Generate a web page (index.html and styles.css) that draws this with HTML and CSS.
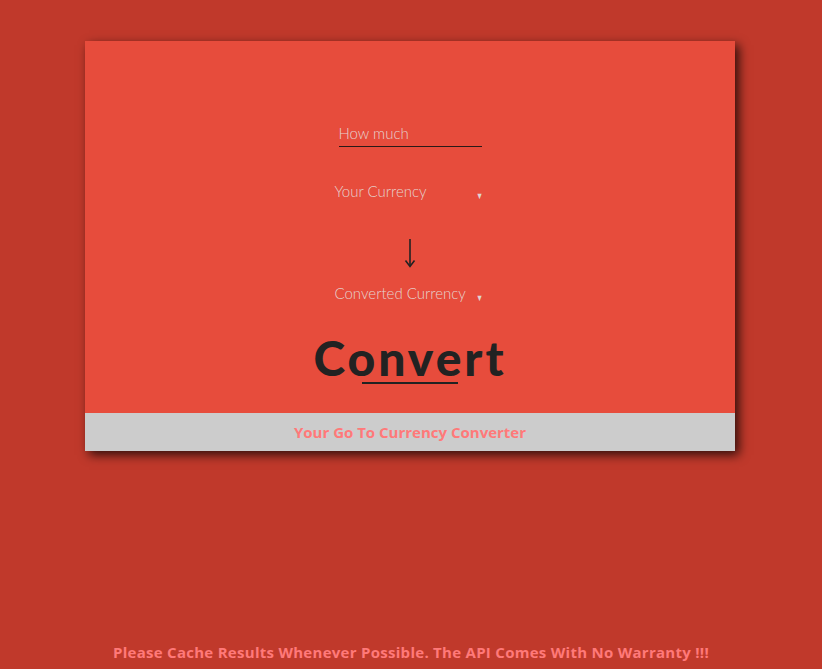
FILE: index.html
```html
<!DOCTYPE html>
<html lang="en">
<head>
<meta charset="utf-8">
<title>Currency Converter</title>
<link rel="stylesheet" href="styles.css">
</head>
<body>
<main class="page">
  <section class="card">
    <div class="card-body">
      <input class="amount" type="text" placeholder="How much">
      <div class="select first">
        <span class="select-label">Your Currency</span>
        <span class="caret">▼</span>
      </div>
      <div class="down-arrow">
        <svg width="16" height="30" viewBox="0 0 16 30" aria-hidden="true">
          <path d="M8 1 V28" stroke="#222" stroke-width="1.6" fill="none"/>
          <path d="M3.5 22.5 L8 28.5 L12.5 22.5" stroke="#222" stroke-width="1.6" fill="none" stroke-linejoin="miter"/>
        </svg>
      </div>
      <div class="select second">
        <span class="select-label">Converted Currency</span>
        <span class="caret">▼</span>
      </div>
      <button class="convert" type="button">Convert</button>
    </div>
    <footer class="card-footer">Your Go To Currency Converter</footer>
  </section>
  <p class="notice">Please Cache Results Whenever Possible. The API Comes With No Warranty !!!</p>
</main>
</body>
</html>
```

FILE: styles.css
```css
* { box-sizing: border-box; }
html, body { margin: 0; padding: 0; }
body {
  background: #c0392b;
  font-family: "Lato", "Open Sans", sans-serif;
  height: 669px;
  overflow: hidden;
}
.page {
  display: flex;
  flex-direction: column;
  align-items: center;
  padding-top: 41px;
  height: 669px;
}
.card {
  width: 650px;
  margin-left: -2px;
  box-shadow: 4px 4px 10px rgba(0, 0, 0, 0.75);
}
.card-body {
  background: #e74c3c;
  height: 372px;
  display: flex;
  flex-direction: column;
  align-items: center;
  padding-top: 78px;
}
.amount {
  width: 143px;
  height: 28px;
  border: none;
  border-bottom: 1px solid #2a1a18;
  background: transparent;
  font-family: "Lato", sans-serif;
  font-weight: 300;
  font-size: 15px;
  color: #e6d2ce;
  padding: 0;
  outline: none;
}
.amount::placeholder { color: #e6d2ce; }
.select {
  width: 150px;
  display: flex;
  align-items: center;
  justify-content: space-between;
  color: #e6d2ce;
  font-weight: 300;
  font-size: 15px;
  margin-left: -1px;
}
.select.first { margin-top: 32px; height: 24px; }
.select.second { margin-top: 14px; height: 24px; }
.select-label { line-height: 20px; }
.caret {
  font-family: "DejaVu Sans", sans-serif;
  font-size: 9px;
  line-height: 10px;
  color: #e0d4d2;
  margin-right: 1px;
  margin-top: 10px;
  transform: scaleX(0.8);
}
.down-arrow {
  margin-top: 32px;
  height: 32px;
  display: flex;
  align-items: flex-start;
}
.down-arrow svg { display: block; margin-top: 3px; }
.convert {
  margin-top: 25px;
  background: none;
  border: none;
  padding: 0;
  display: flex;
  flex-direction: column;
  align-items: center;
  font-family: "Lato", sans-serif;
  font-weight: 900;
  font-size: 48px;
  line-height: 56px;
  letter-spacing: 3px;
  color: #222;
  cursor: pointer;
}
.convert::after {
  content: "";
  display: block;
  width: 96px;
  height: 2px;
  background: #222;
  margin-top: -4px;
}
.card-footer {
  background: #cccccc;
  height: 38px;
  display: flex;
  align-items: center;
  justify-content: center;
  font-family: "Open Sans", sans-serif;
  font-weight: 700;
  font-size: 15px;
  color: #ff7979;
}
.notice {
  margin: auto 0 7px;
  font-family: "Open Sans", sans-serif;
  font-weight: 700;
  font-size: 15px;
  letter-spacing: 0.28px;
  color: #ff7979;
}
```
